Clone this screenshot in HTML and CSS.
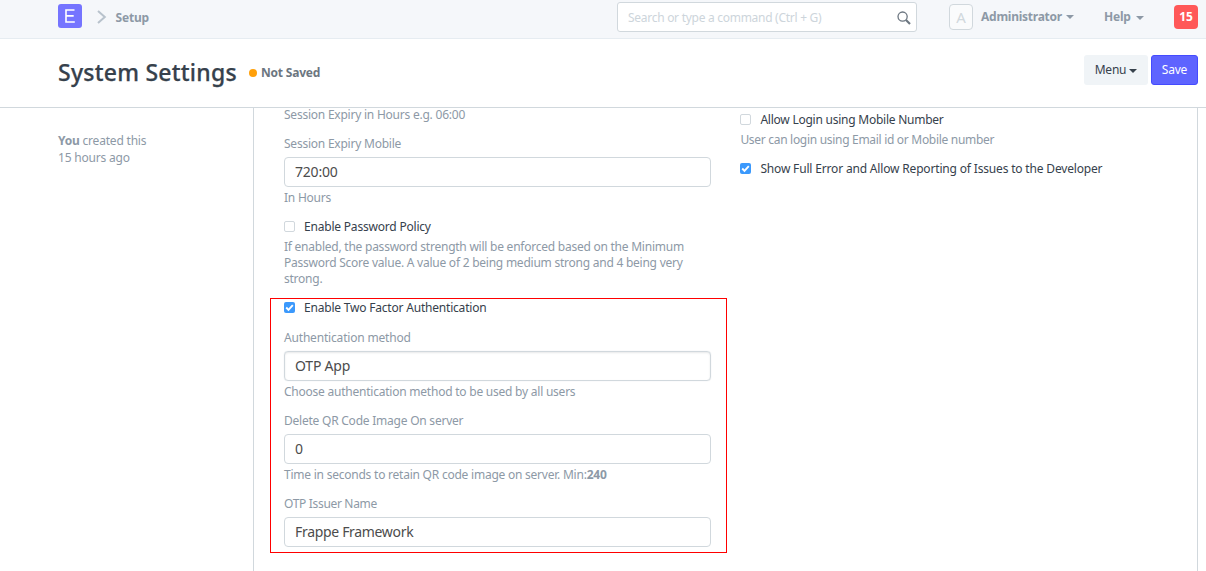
FILE: index.html
```html
<!DOCTYPE html>
<html lang="en">
<head>
<meta charset="utf-8">
<title>System Settings</title>
<link rel="stylesheet" href="styles.css">
</head>
<body>
<header class="navbar">
  <div class="logo"><svg width="24" height="24" viewBox="0 0 24 24"><rect width="24" height="24" rx="3" fill="#7574ff"/><path d="M16.5 6H8v12h8.8M8 11.9h7.7" fill="none" stroke="#fff" stroke-width="1.6"/></svg></div>
  <svg class="chevron" width="10" height="14" viewBox="0 0 10 14"><path d="M1 1l6.8 6L1 13" fill="none" stroke="#b8c2cc" stroke-width="2"/></svg>
  <span class="crumb">Setup</span>
  <div class="search"><span class="placeholder">Search or type a command (Ctrl + G)</span>
    <svg width="14" height="14" viewBox="0 0 14 14"><circle cx="5.6" cy="5.6" r="4.6" fill="none" stroke="#6c7680" stroke-width="1.3"/><path d="M9 9l4 4" stroke="#6c7680" stroke-width="2.2"/></svg>
  </div>
  <span class="avatar">A</span>
  <span class="nav-link admin">Administrator</span><i class="caret"></i>
  <span class="nav-link help">Help</span><i class="caret"></i>
  <span class="badge">15</span>
</header>
<div class="page-head">
  <h1>System Settings</h1>
  <i class="dot"></i><span class="status">Not Saved</span>
  <button class="btn menu"><span>Menu</span><i class="caret dark"></i></button>
  <button class="btn save"><span>Save</span></button>
</div>
<main class="page">
  <aside class="sidebar"><b>You</b> created this<br><span class="ago">15 hours ago</span></aside>
  <div class="form">
    <section class="col left">
      <p class="muted first">Session Expiry in Hours e.g. 06:00</p>
      <label class="muted">Session Expiry Mobile</label>
      <div class="input">720:00</div>
      <p class="muted help-text">In Hours</p>
      <div class="check"><i class="box"></i><span>Enable Password Policy</span></div>
      <p class="muted policy">If enabled, the password strength will be enforced based on the Minimum<br>Password Score value. A value of 2 being medium strong and 4 being very<br>strong.</p>
      <div class="highlight">
        <div class="check"><i class="box on"><svg width="11" height="11" viewBox="0 0 11 11"><path d="M2.2 5.5l2.3 2.3 4.3-4.6" fill="none" stroke="#fff" stroke-width="1.9"/></svg></i><span>Enable Two Factor Authentication</span></div>
        <label class="muted auth">Authentication method</label>
        <div class="input select">OTP App</div>
        <p class="muted help-text">Choose authentication method to be used by all users</p>
        <label class="muted">Delete QR Code Image On server</label>
        <div class="input">0</div>
        <p class="muted help-text">Time in seconds to retain QR code image on server. Min:<b>240</b></p>
        <label class="muted issuer-label">OTP Issuer Name</label>
        <div class="input issuer">Frappe Framework</div>
      </div>
    </section>
    <section class="col right">
      <div class="check mobile"><i class="box"></i><span>Allow Login using Mobile Number</span></div>
      <p class="muted login">User can login using Email id or Mobile number</p>
      <div class="check reporting"><i class="box on"><svg width="11" height="11" viewBox="0 0 11 11"><path d="M2.2 5.5l2.3 2.3 4.3-4.6" fill="none" stroke="#fff" stroke-width="1.9"/></svg></i><span>Show Full Error and Allow Reporting of Issues to the Developer</span></div>
    </section>
  </div>
</main>
</body>
</html>
```
FILE: styles.css
```css
* { box-sizing: border-box; }
body {
  margin: 0;
  height: 571px;
  overflow: hidden;
  background: #fff;
  color: #36414c;
  font: 12px/16px "Noto Sans", "Open Sans", sans-serif;
  letter-spacing: -0.2px;
  white-space: nowrap;
}
p, h1 { margin: 0; }
svg { display: block; }

.navbar {
  display: flex;
  align-items: flex-start;
  height: 39px;
  padding-left: 58px;
  background: #f5f7fa;
  border-bottom: 1px solid #e6ecf1;
  color: #8d99a6;
  font-weight: 700;
}
.logo { margin-top: 4px; }
.chevron { margin: 10px 0 0 15px; }
.crumb { width: 501.5px; margin: 10px 0 0 8.5px; }
.search {
  display: flex;
  justify-content: space-between;
  width: 300px;
  height: 30px;
  margin-top: 2px;
  padding: 7px 5px 0 10px;
  background: #fff;
  border: 1px solid #d1d8dd;
  border-radius: 3px;
  color: #cdd5db;
  font-weight: 400;
}
.placeholder { letter-spacing: -0.28px; }
.search svg { margin-top: 1px; }
.avatar {
  width: 24px;
  height: 26px;
  margin: 4px 8px 0 32px;
  border: 1px solid #d1d8dd;
  border-radius: 4px;
  background: #fafbfc;
  color: #d1d8dd;
  font-size: 15px;
  font-weight: 400;
  line-height: 24px;
  text-align: center;
}
.nav-link { margin-top: 9px; }
.admin { width: 85px; letter-spacing: -0.25px; }
.help { width: 32px; margin-left: 30px; }
.caret {
  width: 0;
  height: 0;
  margin-top: 15px;
  border: 4px solid transparent;
  border-top-color: #8d99a6;
  border-bottom: 0;
}
.help + .caret { margin-top: 16px; }
.caret.dark { margin: 2px 0 0 3px; border-top-color: #36414c; }
.badge {
  width: 24px;
  height: 24px;
  margin: 5px 0 0 30px;
  border-radius: 4px;
  background: #ff5858;
  color: #fff;
  line-height: 24px;
  text-align: center;
}

.page-head {
  display: flex;
  align-items: center;
  height: 69px;
  padding: 0 8px 0 58px;
  border-bottom: 1px solid #d1d8dd;
}
h1 {
  width: 191px;
  margin-top: -2px;
  font-size: 23px;
  font-weight: 500;
  line-height: 32px;
  letter-spacing: 0.24px;
  -webkit-text-stroke: 0.25px #36414c;
}
.dot { width: 8px; height: 8px; border-radius: 50%; background: #ffa00a; }
.status { margin-left: 4px; color: #6c7680; font-weight: 700; }
.btn {
  display: flex;
  align-items: center;
  justify-content: center;
  height: 30px;
  margin-top: -6px;
  padding: 0;
  border: 0;
  border-radius: 3px;
  background: #f0f4f7;
  color: #36414c;
  font: inherit;
  letter-spacing: inherit;
}
.menu { width: 64px; margin-left: auto; }
.save {
  width: 47px;
  margin-left: 3px;
  border: 1px solid #444bff;
  background: #5e64ff;
  color: #fff;
}

.page { display: flex; height: 463px; }
.sidebar {
  width: 253px;
  padding: 24px 0 0 58px;
  color: #8d99a6;
  line-height: 17px;
}
.form {
  display: flex;
  width: 945px;
  border: solid #d1d8dd;
  border-width: 0 1px;
}
.left { width: 457px; margin-left: 16px; padding-top: 7px; }
.left > * { margin-left: 14px; }
.right { margin-left: 13.4px; padding-top: 4px; }
.muted { display: block; color: #8d99a6; letter-spacing: -0.23px; }
.first { margin-top: -8px; }
.muted + label { margin-top: 13px; }
.input {
  width: 427px;
  height: 30px;
  margin-top: 5px;
  padding-left: 10px;
  border: 1px solid #d1d8dd;
  border-radius: 4px;
  color: #4c4c4c;
  font-size: 14px;
  line-height: 28px;
}
.input.select { box-shadow: inset 0 1px 2px rgba(54, 65, 76, 0.12), 0 0 1px #d1d8dd; }
.input.issuer { letter-spacing: -0.32px; }
.help-text { margin-top: 3px; }
.check { display: flex; align-items: flex-start; height: 16px; }
.box {
  width: 11px;
  height: 11px;
  margin: 2px 9px 0 0;
  border: 1px solid #d1d8dd;
  border-radius: 2px;
}
.box.on { border: 0; background: #3b99fc; }
.left > .check { margin-top: 13px; }
.policy { margin-top: 4px; letter-spacing: -0.24px; }
.left > .highlight {
  width: 457px;
  height: 255px;
  margin: 11px 0 0;
  padding: 1px 0 0 13px;
  border: 1px solid red;
}
.highlight .auth { margin-top: 14px; letter-spacing: -0.18px; }
.issuer-label { letter-spacing: -0.32px; }
.mobile { letter-spacing: -0.24px; }
.login { margin: 4px 0 13px; letter-spacing: -0.3px; }
.reporting { letter-spacing: -0.17px; }
```
